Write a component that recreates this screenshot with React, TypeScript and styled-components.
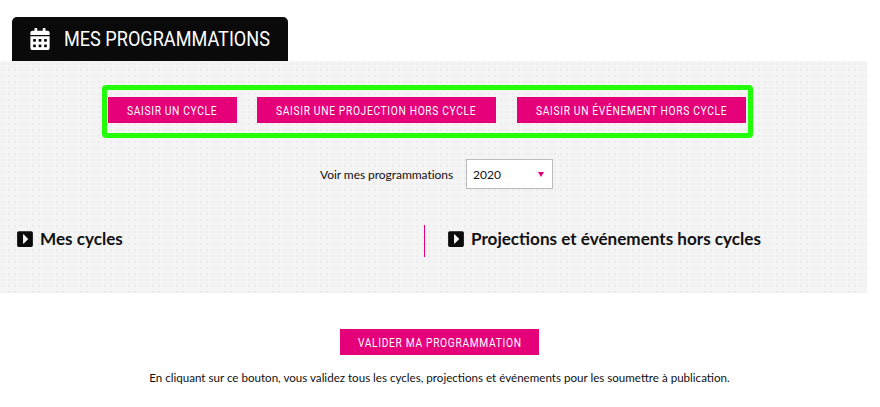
import React from 'react';
import styled, { createGlobalStyle } from 'styled-components';
import { FaCalendarAlt, FaCaretSquareRight } from 'react-icons/fa';

const GlobalStyle = createGlobalStyle`
  html, body {
    margin: 0;
    padding: 0;
    background: #fff;
    overflow: hidden;
  }
  body {
    font-family: Lato, "Open Sans", sans-serif;
    color: #111;
  }
`;

const Page = styled.div`
  width: 879px;
  padding-top: 17px;
`;

const Tab = styled.div`
  margin-left: 12px;
  width: 276px;
  height: 44px;
  box-sizing: border-box;
  padding-left: 18px;
  display: flex;
  align-items: center;
  gap: 14px;
  background: #0a0a0a;
  border-radius: 5px 5px 0 0;
  color: #fff;
  overflow: hidden;
  svg {
    width: 20px;
    height: 22px;
    flex: none;
  }
`;

const TabTitle = styled.h1`
  margin: 0;
  font-family: Roboto, sans-serif;
  font-size: 21px;
  font-weight: 400;
  white-space: nowrap;
  transform: scaleX(0.862);
  transform-origin: left center;
`;

const Panel = styled.section`
  width: 867px;
  height: 232px;
  box-sizing: border-box;
  padding-top: 24px;
  background-color: #f4f4f4;
  background-image: url("data:image/svg+xml,%3Csvg width='6' height='6' xmlns='http://www.w3.org/2000/svg'%3E%3Crect x='2' y='2' width='2' height='2' fill='%23ebebeb'/%3E%3C/svg%3E");
  background-size: 6px 6px;
`;

const ActionBox = styled.div`
  margin-left: 102px;
  width: 651px;
  height: 53px;
  box-sizing: border-box;
  padding: 0 0 3px 1px;
  display: flex;
  align-items: center;
  border: 5px solid #22ff08;
  border-radius: 4px;
`;

const Button = styled.button<{ $width: number; $gap?: number }>`
  width: ${props => props.$width}px;
  height: 26px;
  margin-left: ${props => props.$gap ?? 0}px;
  padding: 0;
  display: flex;
  align-items: center;
  justify-content: center;
  flex: none;
  border: none;
  background: #e5007a;
  color: #fff;
  font-family: Roboto, sans-serif;
  font-size: 12.5px;
  font-weight: 400;
  letter-spacing: 0.8px;
  white-space: nowrap;
  text-transform: uppercase;
`;

const ButtonLabel = styled.span`
  flex: none;
  transform: scaleX(0.82);
`;

const FilterRow = styled.div`
  margin-top: 21px;
  margin-left: 320px;
  display: flex;
  align-items: center;
  gap: 14px;
`;

const FilterLabel = styled.span`
  width: 132px;
  font-size: 12px;
  letter-spacing: -0.05px;
  white-space: nowrap;
`;

const Select = styled.div`
  width: 87px;
  height: 30px;
  box-sizing: border-box;
  padding: 0 8px 0 6px;
  display: flex;
  align-items: center;
  justify-content: space-between;
  background: #fff;
  border: 1px solid #bbb;
  font-size: 12px;
`;

const Caret = styled.span`
  width: 0;
  height: 0;
  border-left: 3px solid transparent;
  border-right: 3px solid transparent;
  border-top: 5px solid #e5007a;
`;

const Columns = styled.div`
  margin-top: 36px;
  display: grid;
  grid-template-columns: 424px 1fr;
`;

const Column = styled.div<{ $divided?: boolean }>`
  height: 32px;
  box-sizing: border-box;
  padding-left: ${props => (props.$divided ? 23 : 17)}px;
  display: flex;
  align-items: flex-start;
  padding-top: 3px;
  gap: 7px;
  border-left: ${props => (props.$divided ? '1px solid #e5007a' : 'none')};
  svg {
    width: 16px;
    height: 18px;
    flex: none;
    margin-top: 2px;
    color: #0a0a0a;
  }
`;

const ColumnTitle = styled.h2`
  margin: 0;
  font-family: Lato, sans-serif;
  font-size: 17.1px;
  line-height: 21px;
  font-weight: 700;
  white-space: nowrap;
`;

const Footer = styled.div`
  padding-top: 36px;
  display: flex;
  flex-direction: column;
  align-items: center;
`;

const Notice = styled.p`
  margin: 15px 0 0;
  font-size: 11.6px;
  line-height: 16px;
  white-space: nowrap;
`;

const App: React.FC = () => {
  return (
    <Page>
      <GlobalStyle />
      <Tab>
        <FaCalendarAlt />
        <TabTitle>MES PROGRAMMATIONS</TabTitle>
      </Tab>

      <Panel>
        <ActionBox>
          <Button $width={129}><ButtonLabel>Saisir un cycle</ButtonLabel></Button>
          <Button $width={239} $gap={20}><ButtonLabel>Saisir une projection hors cycle</ButtonLabel></Button>
          <Button $width={229} $gap={21}><ButtonLabel>Saisir un événement hors cycle</ButtonLabel></Button>
        </ActionBox>

        <FilterRow>
          <FilterLabel>Voir mes programmations</FilterLabel>
          <Select>
            2020
            <Caret />
          </Select>
        </FilterRow>

        <Columns>
          <Column>
            <FaCaretSquareRight />
            <ColumnTitle>Mes cycles</ColumnTitle>
          </Column>
          <Column $divided>
            <FaCaretSquareRight />
            <ColumnTitle>Projections et événements hors cycles</ColumnTitle>
          </Column>
        </Columns>
      </Panel>

      <Footer>
        <Button $width={199}><ButtonLabel>Valider ma programmation</ButtonLabel></Button>
        <Notice>
          En cliquant sur ce bouton, vous validez tous les cycles, projections et événements pour les soumettre à publication.
        </Notice>
      </Footer>
    </Page>
  );
};

export default App;
